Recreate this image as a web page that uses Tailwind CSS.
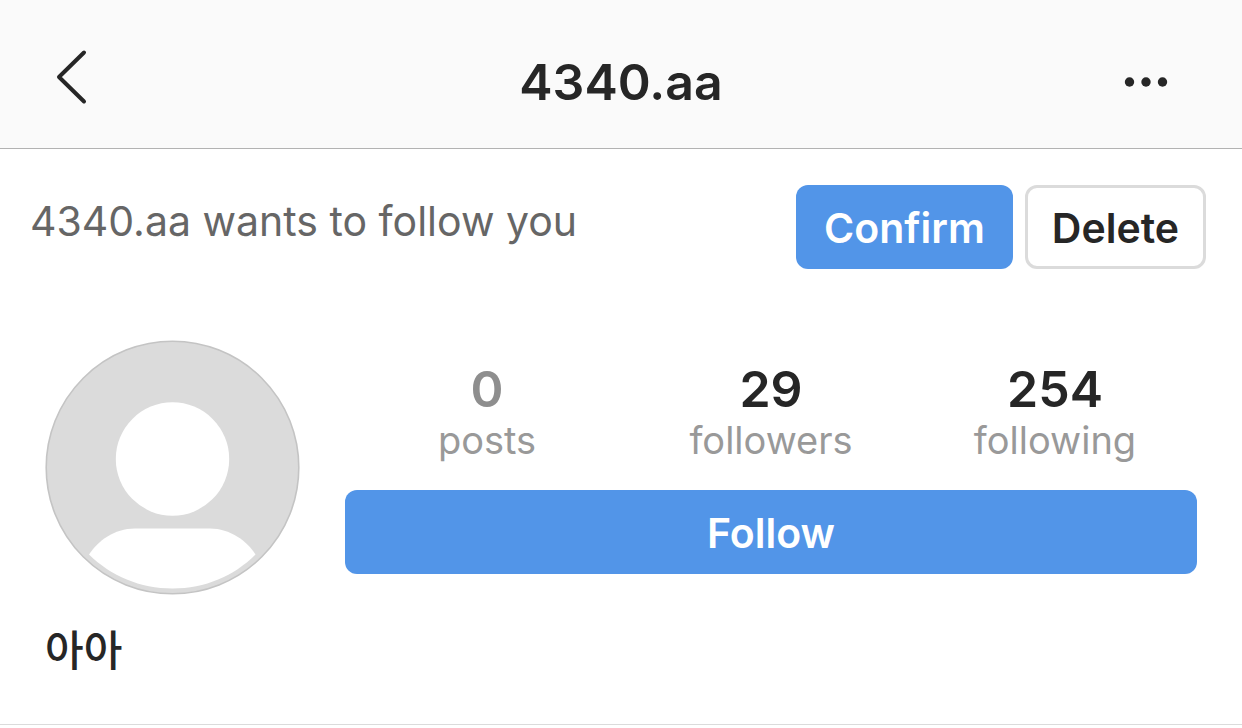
<!DOCTYPE html>
<html lang="en">

<head>
    <meta charset="UTF-8">
    <meta name="viewport" content="width=device-width, initial-scale=1.0">
    <title>4340.aa</title>
    <script src="https://cdn.jsdelivr.net/npm/@tailwindcss/browser@4"></script>
</head>

<body class="bg-white text-[#262626] font-['Inter','Noto_Sans_CJK_KR',sans-serif]">
    <!-- Top Bar -->
    <header class="grid grid-cols-[1fr_auto_1fr] items-center bg-[#fafafa] border-b border-[#b2b2b2] px-12 pt-[42px] pb-[26px]">
        <button type="button" aria-label="Back" class="justify-self-start">
            <svg class="block w-12 h-16 mb-4" viewBox="0 0 48 64" fill="none" stroke="#262626" stroke-width="4" stroke-linecap="round" stroke-linejoin="round">
                <path d="M36 10.500 L11 35 L36 59.500" />
            </svg>
        </button>
        <h1 class="text-[50px] leading-[60px] font-semibold">4340.aa</h1>
        <button type="button" aria-label="More options" class="justify-self-end px-6">
            <svg class="block w-12 h-4" viewBox="0 0 48 16" fill="#262626">
                <circle cx="7.5" cy="8" r="4.7" />
                <circle cx="24" cy="8" r="4.7" />
                <circle cx="40.5" cy="8" r="4.7" />
            </svg>
        </button>
    </header>

    <main class="border-b border-[#dbdbdb]">
        <!-- Follow Request -->
        <section class="flex items-start justify-between pt-9 pl-[30px] pr-9">
            <p class="text-[41px] leading-[72px] text-[#666666]">4340.aa wants to follow you</p>
            <div class="flex gap-3 text-[41px] font-semibold">
                <button type="button" class="h-[84px] px-7 pt-1 rounded-xl bg-[#5295e8] text-white">Confirm</button>
                <button type="button" class="h-[84px] px-6 pt-1 rounded-xl border-3 border-[#dbdbdb]">Delete</button>
            </div>
        </section>

        <!-- Profile -->
        <section class="flex gap-[45px] pt-[71px] px-[45px]">
            <svg class="shrink-0 w-[255px] h-[255px]" viewBox="0 0 255 255" role="img" aria-label="Profile photo">
                <circle cx="127.5" cy="127.5" r="126.3" fill="#dbdbdb" stroke="#c4c4c4" stroke-width="1.6" />
                <circle cx="127.5" cy="119" r="56.7" fill="#fff" />
                <path d="M44 214.5 C53 201 69 188.5 90 188.5 H165 C185 188.5 202 201 210.5 214.5 C189 236 160 248.5 127.5 248.5 C95 248.5 66 236 44 214.5 Z" fill="#fff" />
            </svg>
            <div class="flex-1 pt-5">
                <ul class="grid grid-cols-3 text-center text-[38px] leading-[44px] text-[#999999]">
                    <li><strong class="block text-[50px] leading-[58px] font-semibold text-[#8e8e8e]">0</strong>posts</li>
                    <li><strong class="block text-[50px] leading-[58px] font-semibold text-[#262626]">29</strong>followers</li>
                    <li><strong class="block text-[50px] leading-[58px] font-semibold text-[#262626]">254</strong>following</li>
                </ul>
                <button type="button" class="mt-7 w-full h-[84px] pt-1 rounded-xl bg-[#5295e8] text-white text-[41px] font-semibold">Follow</button>
            </div>
        </section>
        <h2 class="pt-[26px] pl-[45px] pb-[43px] text-[42px] leading-[60px] font-medium">아아</h2>
    </main>
</body>

</html>
